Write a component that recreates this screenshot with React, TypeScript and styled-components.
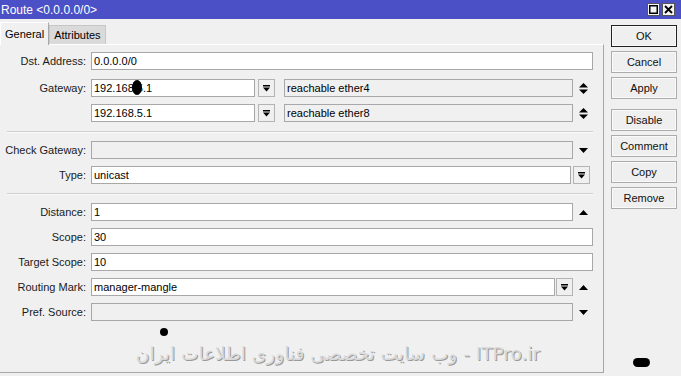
import styled, { createGlobalStyle } from 'styled-components'

const GlobalStyle = createGlobalStyle`
  body {
    margin: 0;
    background: #f0f0f0;
  }
`

const Window = styled.div`
  width: 681px;
  height: 376px;
  position: relative;
  overflow: hidden;
  background: #f0f0f0;
  font-family: "Liberation Sans", Arial, sans-serif;
  font-size: 11px;
  color: #000;
  display: flex;
  flex-direction: column;
`

const TitleBar = styled.div`
  height: 19px;
  flex: none;
  background: #4c50c6;
  color: #fff;
  font-size: 12px;
  display: flex;
  align-items: center;
  justify-content: space-between;
  padding: 0 6px 0 1px;
`

const TitleButtons = styled.div`
  display: flex;
  gap: 2px;
`

const TitleBtn = styled.div`
  width: 13px;
  height: 13px;
  box-sizing: border-box;
  background: #f4f4f4;
  border: 1px solid #555;
  display: flex;
  align-items: center;
  justify-content: center;
`

const Body = styled.div`
  flex: 1;
  display: flex;
`

const LeftCol = styled.div`
  width: 604px;
  display: flex;
  flex-direction: column;
  margin-bottom: 3px;
`

const Tabs = styled.div`
  height: 25px;
  display: flex;
  align-items: flex-end;
`

const Tab = styled.div<{ $active?: boolean }>`
  box-sizing: border-box;
  display: flex;
  align-items: center;
  padding: 0 4px;
  height: ${(p) => (p.$active ? '23px' : '19px')};
  background: ${(p) => (p.$active ? '#f0f0f0' : '#dadada')};
  border: 1px solid ${(p) => (p.$active ? '#fff' : '#c6c6c6')};
  border-right-color: ${(p) => (p.$active ? '#a8a8a8' : '#c6c6c6')};
  border-bottom: none;
  margin-bottom: ${(p) => (p.$active ? '-1px' : '0')};
  position: relative;
`

const Panel = styled.div`
  flex: 1;
  box-sizing: border-box;
  border-top: 1px solid #fff;
  border-left: 1px solid #fff;
  border-right: 1px solid #a8a8a8;
  border-bottom: 1px solid #a8a8a8;
  padding: 7px 10px 0 0;
  margin-left: -1px;
`

const Section = styled.div`
  display: flex;
  flex-direction: column;
  gap: 7px;
`

const Row = styled.div<{ $mb?: number }>`
  display: flex;
  align-items: center;
  height: 18px;
  margin-bottom: ${(p) => p.$mb ?? 0}px;
`

const Label = styled.div`
  width: 91px;
  flex: none;
  box-sizing: border-box;
  padding-right: 5px;
  text-align: right;
  white-space: nowrap;
  color: #1a1a1a;
`

const Field = styled.div<{ $grey?: boolean; $w?: number }>`
  box-sizing: border-box;
  height: 18px;
  ${(p) => (p.$w ? `width: ${p.$w}px; flex: none;` : 'flex: 1;')}
  background: ${(p) => (p.$grey ? '#f0f0f0' : '#fff')};
  border: 1px solid #a8a8a8;
  padding: 0 2px;
  line-height: 16px;
  white-space: nowrap;
  overflow: hidden;
`

const DropBtn = styled.div<{ $ml?: number }>`
  box-sizing: border-box;
  width: 17px;
  height: 18px;
  flex: none;
  margin-left: ${(p) => p.$ml ?? 0}px;
  border: 1px solid #b4b4b4;
  background: #f0f0f0;
  display: flex;
  align-items: center;
  justify-content: center;
`

const Trail = styled.div`
  width: 20px;
  flex: none;
  height: 18px;
  display: flex;
  align-items: center;
  justify-content: center;
`

const Separator = styled.div`
  height: 1px;
  background: #cfcfcf;
  border-bottom: 1px solid #fafafa;
  margin: 9px 0 8px 7px;
`

const RightCol = styled.div`
  display: flex;
  flex-direction: column;
  padding: 6px 0 0 7px;
`

const ActionBtn = styled.div<{ $focus?: boolean; $mb?: number }>`
  box-sizing: border-box;
  width: 66px;
  height: 22px;
  margin-bottom: ${(p) => p.$mb ?? 4}px;
  border: 1px solid ${(p) => (p.$focus ? '#222' : '#acacac')};
  background: #efefef;
  box-shadow: inset 0 0 0 1px #fafafa;
  display: flex;
  align-items: center;
  justify-content: center;
  color: #111;
`

const Watermark = styled.div`
  position: absolute;
  left: 0;
  width: 676px;
  top: 343px;
  text-align: center;
  font-family: "DejaVu Sans", sans-serif;
  font-size: 18.5px;
  color: #dadada;
  text-shadow: 1px 1px 0 #9a9a9a;
  white-space: nowrap;
`

const Blob = styled.div<{ $x: number; $y: number; $w: number; $h: number }>`
  position: absolute;
  left: ${(p) => p.$x}px;
  top: ${(p) => p.$y}px;
  width: ${(p) => p.$w}px;
  height: ${(p) => p.$h}px;
  border-radius: 50%;
  background: #000;
`

const Pill = styled(Blob)`
  border-radius: 5px;
`

const DropIcon = () => (
  <svg width="7" height="7" viewBox="0 0 7 7">
    <rect x="0" y="0" width="7" height="1.5" fill="#000" />
    <polygon points="0,2.5 7,2.5 3.5,6.5" fill="#000" />
  </svg>
)

const UpIcon = () => (
  <svg width="9" height="5" viewBox="0 0 9 5">
    <polygon points="0,5 9,5 4.5,0" fill="#000" />
  </svg>
)

const DownIcon = () => (
  <svg width="9" height="5" viewBox="0 0 9 5">
    <polygon points="0,0 9,0 4.5,5" fill="#000" />
  </svg>
)

const UpDownIcon = () => (
  <svg width="9" height="11" viewBox="0 0 9 11">
    <polygon points="0,4.5 9,4.5 4.5,0" fill="#000" />
    <polygon points="0,6.5 9,6.5 4.5,11" fill="#000" />
  </svg>
)

export default function App() {
  return (
    <Window>
      <GlobalStyle />
      <TitleBar>
        <span>Route &lt;0.0.0.0/0&gt;</span>
        <TitleButtons>
          <TitleBtn>
            <svg width="9" height="9" viewBox="0 0 9 9">
              <rect x="0.75" y="0.75" width="7.5" height="7.5" fill="none" stroke="#000" strokeWidth="1.5" />
            </svg>
          </TitleBtn>
          <TitleBtn>
            <svg width="9" height="9" viewBox="0 0 9 9">
              <path d="M1 1 L8 8 M8 1 L1 8" stroke="#000" strokeWidth="1.8" />
            </svg>
          </TitleBtn>
        </TitleButtons>
      </TitleBar>

      <Body>
        <LeftCol>
          <Tabs>
            <Tab $active>General</Tab>
            <Tab>Attributes</Tab>
          </Tabs>
          <Panel>
            <Section>
              <Row $mb={2}>
                <Label>Dst. Address:</Label>
                <Field>0.0.0.0/0</Field>
              </Row>
              <Row>
                <Label>Gateway:</Label>
                <Field $w={164}>192.168.5.1</Field>
                <DropBtn $ml={3}><DropIcon /></DropBtn>
                <Field $grey style={{ marginLeft: 9 }}>reachable ether4</Field>
                <Trail><UpDownIcon /></Trail>
              </Row>
              <Row>
                <Label />
                <Field $w={164}>192.168.5.1</Field>
                <DropBtn $ml={3}><DropIcon /></DropBtn>
                <Field $grey style={{ marginLeft: 9 }}>reachable ether8</Field>
                <Trail><UpDownIcon /></Trail>
              </Row>
            </Section>

            <Separator />

            <Section>
              <Row>
                <Label>Check Gateway:</Label>
                <Field $grey />
                <Trail><DownIcon /></Trail>
              </Row>
              <Row>
                <Label>Type:</Label>
                <Field>unicast</Field>
                <DropBtn $ml={2}><DropIcon /></DropBtn>
                <Trail style={{ width: 3 }} />
              </Row>
            </Section>

            <Separator />

            <Section>
              <Row>
                <Label>Distance:</Label>
                <Field>1</Field>
                <Trail><UpIcon /></Trail>
              </Row>
              <Row>
                <Label>Scope:</Label>
                <Field>30</Field>
              </Row>
              <Row>
                <Label>Target Scope:</Label>
                <Field>10</Field>
              </Row>
              <Row>
                <Label>Routing Mark:</Label>
                <Field>manager-mangle</Field>
                <DropBtn $ml={1}><DropIcon /></DropBtn>
                <Trail><UpIcon /></Trail>
              </Row>
              <Row>
                <Label>Pref. Source:</Label>
                <Field $grey />
                <Trail><DownIcon /></Trail>
              </Row>
            </Section>
          </Panel>
        </LeftCol>

        <RightCol>
          <ActionBtn $focus>OK</ActionBtn>
          <ActionBtn>Cancel</ActionBtn>
          <ActionBtn $mb={10}>Apply</ActionBtn>
          <ActionBtn>Disable</ActionBtn>
          <ActionBtn>Comment</ActionBtn>
          <ActionBtn>Copy</ActionBtn>
          <ActionBtn>Remove</ActionBtn>
        </RightCol>
      </Body>

      <Blob $x={132} $y={80} $w={10} $h={15} />
      <Blob $x={160} $y={328} $w={8} $h={8} />
      <Pill $x={633} $y={358} $w={17} $h={9} />
      <Watermark>وب سایت تخصصی فناوری اطلاعات ایران - ITPro.ir</Watermark>
    </Window>
  )
}
